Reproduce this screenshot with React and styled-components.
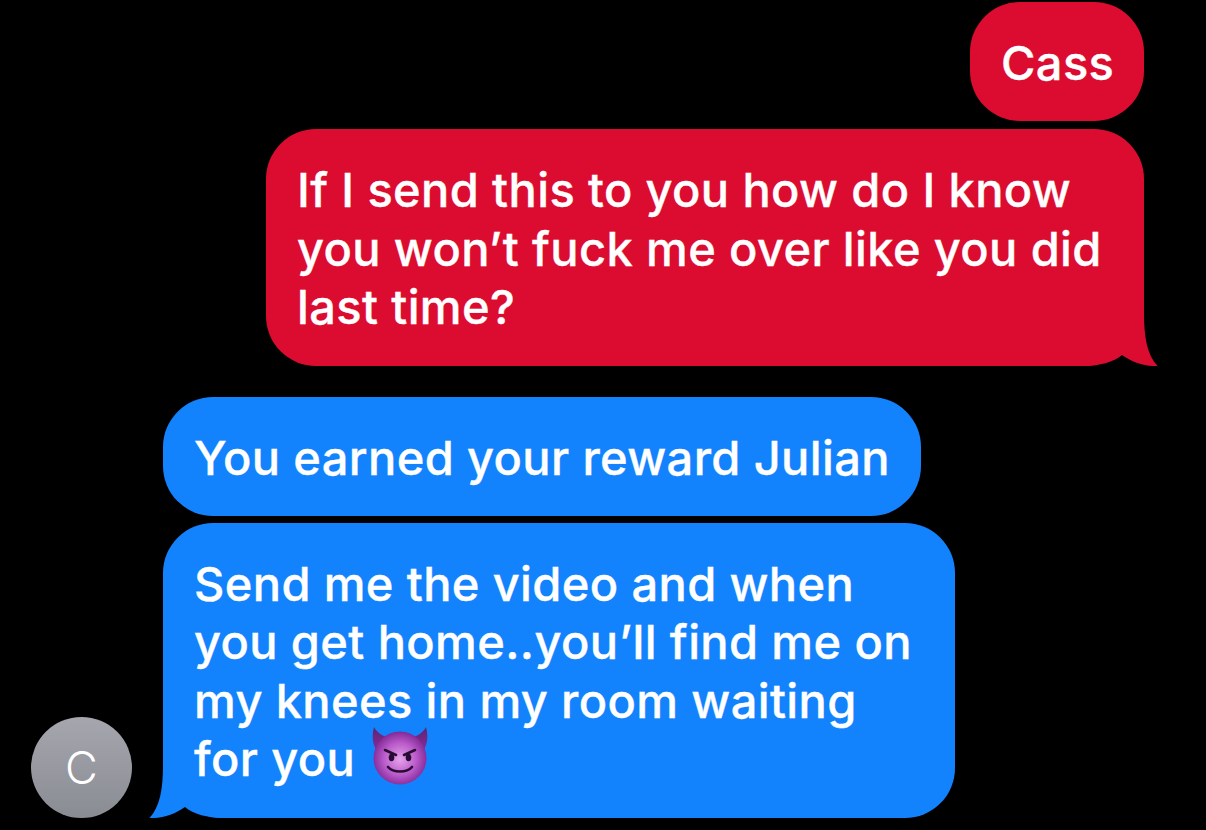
import React from "react";
import styled, { createGlobalStyle } from "styled-components";

const Global = createGlobalStyle`
  html, body { margin: 0; background: #000; }
  body { width: 1206px; height: 830px; overflow: hidden; }
`;

const Thread = styled.main`
  display: flex;
  flex-direction: column;
  box-sizing: border-box;
  width: 1206px;
  height: 830px;
  padding: 1.5px 62px 0 31px;
  font-family: Inter, "Liberation Sans", sans-serif;
  background: #000;
`;

const OutgoingGroup = styled.section`
  display: flex;
  flex-direction: column;
  align-items: flex-end;
  gap: 8px;
`;

const IncomingGroup = styled.section`
  display: flex;
  align-items: flex-end;
  gap: 31px;
  margin-top: 31px;
`;

const IncomingStack = styled.div`
  display: flex;
  flex-direction: column;
  align-items: flex-start;
  gap: 6.5px;
`;

const Bubble = styled.div`
  position: relative;
  box-sizing: border-box;
  width: ${(p) => p.$width}px;
  padding: 32px 0 29px 31px;
  border-radius: 50px;
  ${(p) => p.$tail === "right" && "border-bottom-right-radius: 60px;"}
  ${(p) => p.$tail === "left" && "border-bottom-left-radius: 60px;"}
  background: ${(p) => p.$color};
  color: #fff;
  font-size: 47px;
  line-height: 58.5px;
  font-weight: 500;
  letter-spacing: 0.38px;
  -webkit-text-stroke: 0.35px #fff;
  white-space: nowrap;
`;

const Tail = styled.svg`
  position: absolute;
  bottom: 0;
  width: 74px;
  height: 60px;
  fill: ${(p) => p.$color};
  ${(p) =>
    p.$side === "right"
      ? "right: -14px;"
      : "left: -14px; transform: scaleX(-1);"}
`;

const Avatar = styled.div`
  display: flex;
  align-items: center;
  justify-content: center;
  flex: none;
  width: 101px;
  height: 101px;
  border-radius: 50%;
  background: linear-gradient(#a5a6ae, #8a8c93);
  color: #fff;
  font-size: 45px;
  font-weight: 300;
`;

const EmojiIcon = styled.svg`
  width: 58px;
  height: 60px;
  margin: -10px 0 -10px 16px;
  vertical-align: 0;
`;

const RED = "#dc0c30";
const BLUE = "#1383fd";

function BubbleTail({ side, color }) {
  return (
    <Tail $side={side} $color={color} viewBox="0 0 74 60" aria-hidden="true">
      <path d="M60 0 V8 C60 30 63 49 73.5 60 C60 60.5 48 56 38 49 C30 56 15 60 0 60 Z" />
    </Tail>
  );
}

function DevilEmoji() {
  return (
    <EmojiIcon viewBox="0 0 58 60" aria-hidden="true">
      <defs>
        <radialGradient id="face" cx="50%" cy="52%" r="55%">
          <stop offset="0" stopColor="#e6a4ea" />
          <stop offset="0.55" stopColor="#bb5ccb" />
          <stop offset="1" stopColor="#7a2190" />
        </radialGradient>
        <linearGradient id="horn" x1="0" y1="0" x2="0" y2="1">
          <stop offset="0" stopColor="#5c2373" />
          <stop offset="1" stopColor="#8b2f9f" />
        </linearGradient>
      </defs>
      <path d="M3 1 C0 12 2 22 9 28 L21 12 C13 11 7 8 3 1 Z" fill="url(#horn)" />
      <path d="M55 1 C58 12 56 22 49 28 L37 12 C45 11 51 8 55 1 Z" fill="url(#horn)" />
      <circle cx="29" cy="32" r="26.5" fill="url(#face)" />
      <path d="M14 24 L25 29" stroke="#2a0d35" strokeWidth="2.6" strokeLinecap="round" fill="none" />
      <path d="M44 24 L33 29" stroke="#2a0d35" strokeWidth="2.6" strokeLinecap="round" fill="none" />
      <ellipse cx="20.5" cy="31.5" rx="2.8" ry="3.8" fill="#2a0d35" />
      <ellipse cx="37.5" cy="31.5" rx="2.8" ry="3.8" fill="#2a0d35" />
      <path d="M17 41 C22 47 36 47 41 41" stroke="#2a0d35" strokeWidth="2.6" strokeLinecap="round" fill="none" />
    </EmojiIcon>
  );
}

export default function App() {
  return (
    <>
      <Global />
      <Thread>
        <OutgoingGroup>
          <Bubble $width={174} $color={RED}>Cass</Bubble>
          <Bubble $width={878} $color={RED} $tail="right">
            If I send this to you how do I know<br />
            you won’t fuck me over like you did<br />
            last time?
            <BubbleTail side="right" color={RED} />
          </Bubble>
        </OutgoingGroup>
        <IncomingGroup>
          <Avatar>C</Avatar>
          <IncomingStack>
            <Bubble $width={758} $color={BLUE}>You earned your reward Julian</Bubble>
            <Bubble $width={792} $color={BLUE} $tail="left">
              Send me the video and when<br />
              you get home..you’ll find me on<br />
              my knees in my room waiting<br />
              for you<DevilEmoji />
              <BubbleTail side="left" color={BLUE} />
            </Bubble>
          </IncomingStack>
        </IncomingGroup>
      </Thread>
    </>
  );
}
